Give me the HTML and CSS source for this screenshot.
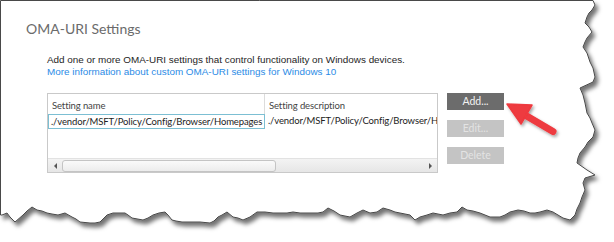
FILE: index.html
```html
<!DOCTYPE html>
<html>
<head>
<meta charset="utf-8">
<link rel="stylesheet" href="styles.css">
</head>
<body>
<div class="sheet">
  <svg class="paper" width="614" height="242" viewBox="0 0 614 242">
    <defs>
      <filter id="sh" x="-5%" y="-5%" width="115%" height="120%">
        <feDropShadow dx="3" dy="4" stdDeviation="2.2" flood-color="#000" flood-opacity="0.55"/>
      </filter>
    </defs>
    <path filter="url(#sh)" fill="#fff" stroke="#4a4a4a" stroke-width="1"
      d="M0.5,0.5 L593,0.5 L595,5 L592,10 L589,13 L587,17 L585,23 L589,27 L592,32 L587,38 L585,42 L583,47 L587,53 L590,62 L593,68 L595,77 L593,82 L580,88 L583,95 L584,99 L585,103 L587,113 L590,118 L592,123 L595,130 L593,137 L588,142 L585,147 L580,153 L578,158 L577,163 L587,170 L595,175 L585,178 L583,183 L585,190 L582,197 L580,203 L577,209 L575,215 L570,220 L563,218 L558,215 L553,212 L547,210 L540,212 L535,213 L530,213 L524,211 L518,210 L510,212 L505,215 L500,217 L490,217 L485,215 L480,213 L473,211 L467,210 L462,207 L457,212 L450,213 L443,215 L433,213 L427,215 L420,217 L415,220 L410,215 L400,213 L395,212 L390,210 L383,208 L377,212 L370,213 L363,210 L357,213 L350,217 L345,216 L340,215 L334,211 L328,208 L323,212 L318,213 L313,213 L300,213 L293,212 L287,213 L280,213 L273,213 L265,212 L257,212 L250,217 L243,220 L238,218 L233,217 L227,212 L222,215 L218,217 L214,221 L210,223 L200,222 L193,222 L182,222 L176,221 L172,220 L168,215 L165,212 L159,213 L153,215 L148,218 L143,220 L132,218 L128,215 L125,213 L119,213 L113,213 L107,215 L100,222 L95,223 L90,223 L80,222 L76,219 L72,217 L65,213 L58,215 L52,214 L47,213 L42,211 L37,210 L32,207 L27,211 L23,215 L15,222 L10,217 L7,213 L2,215 L0.5,215 Z"/>
  </svg>

  <div class="content">
    <h1 class="title">OMA-URI Settings</h1>
    <p class="desc">Add one or more OMA-URI settings that control functionality on Windows devices.<br><a class="link">More information about custom OMA-URI settings for Windows 10</a></p>

    <div class="row">
      <div class="grid">
        <div class="grid-head">
          <div class="col c1">Setting name</div>
          <div class="col c2">Setting description</div>
        </div>
        <div class="grid-row">
          <div class="cell c1 selected">./vendor/MSFT/Policy/Config/Browser/Homepages</div>
          <div class="cell c2">./vendor/MSFT/Policy/Config/Browser/Ho</div>
        </div>
        <div class="grid-fill"></div>
        <div class="hscroll">
          <span class="arr left"></span>
          <div class="track"><div class="thumb"></div></div>
          <span class="arr right"></span>
        </div>
      </div>

      <div class="buttons">
        <button class="btn primary">Add...</button>
        <button class="btn disabled">Edit...</button>
        <button class="btn disabled">Delete</button>
      </div>
    </div>
  </div>

  <svg class="arrow" width="64" height="44" viewBox="504 98 64 44">
    <defs>
      <filter id="ash" x="-20%" y="-20%" width="150%" height="160%">
        <feDropShadow dx="1.5" dy="2" stdDeviation="1.5" flood-color="#000" flood-opacity="0.35"/>
      </filter>
    </defs>
    <g filter="url(#ash)" fill="#ee3a3f" stroke="#ee3a3f">
      <line x1="525" y1="115" x2="553" y2="131.5" stroke-width="7" stroke-linecap="round"/>
      <polygon points="507,104 532,105 521,124" stroke-width="1.5" stroke-linejoin="round"/>
    </g>
  </svg>
</div>
</body>
</html>
```

FILE: styles.css
```css
* { box-sizing: border-box; }
html, body { margin: 0; padding: 0; background: #fff; }
.sheet {
  position: relative;
  width: 614px;
  height: 242px;
  overflow: hidden;
  background: #fff;
}
.paper { position: absolute; left: 0; top: 0; }
.arrow { position: absolute; left: 504px; top: 98px; }

.content {
  position: relative;
  padding: 20px 0 0 26px;
}
.title {
  margin: 0;
  font-family: Lato, "Open Sans", sans-serif;
  font-weight: 400;
  font-size: 14px;
  line-height: 18px;
  color: #6b6b6b;
}
.desc {
  margin: 16px 0 0 21px;
  font-family: "Liberation Sans", Arial, sans-serif;
  font-size: 9.9px;
  line-height: 12px;
  color: #1e1e1e;
}
.link { color: #2b8be6; text-decoration: none; }

.row {
  display: flex;
  align-items: flex-start;
  margin: 15px 0 0 21px;
}
.grid {
  width: 391px;
  height: 80px;
  border: 1px solid #c9c9c9;
  display: flex;
  flex-direction: column;
  font-family: Lato, "Open Sans", sans-serif;
  font-size: 9.5px;
  letter-spacing: -0.12px;
  color: #222;
  background: #fff;
}
.grid-head {
  display: flex;
  height: 20px;
  color: #444;
}
.col {
  padding: 6px 0 0 4px;
  white-space: nowrap;
  overflow: hidden;
  line-height: 12px;
}
.c1 { width: 217px; flex: none; }
.c2 { flex: 1; min-width: 0; }
.grid-head .c1 { border-right: 1px solid #dcdcdc; }
.grid-row {
  display: flex;
  height: 15px;
}
.cell {
  white-space: nowrap;
  overflow: hidden;
  padding: 0 0 0 4px;
  line-height: 13px;
}
.cell.selected {
  border: 1px solid #7cbfd3;
  padding-left: 2px;
}
.cell.c2 { padding-left: 3px; }
.grid-fill { flex: 1; }
.hscroll {
  height: 14px;
  display: flex;
  align-items: center;
  background: linear-gradient(#f3f3f3, #e6e6e6);
  border-top: 1px solid #e2e2e2;
  padding: 0 3px;
}
.arr { width: 0; height: 0; border-top: 3px solid transparent; border-bottom: 3px solid transparent; flex: none; }
.arr.left { border-right: 3px solid #555; margin-left: 3px; }
.arr.right { border-left: 3px solid #555; margin-right: 2px; }
.track { flex: 1; height: 12px; padding: 0 0 0 5px; }
.thumb {
  width: 214px;
  height: 12px;
  border: 1px solid #c4c4c4;
  border-radius: 3px;
  background: linear-gradient(#fafafa, #ececec);
}

.buttons {
  display: flex;
  flex-direction: column;
  gap: 10px;
  margin-left: 9px;
}
.btn {
  width: 57px;
  height: 17px;
  border: 0;
  padding: 0;
  font-family: Lato, "Open Sans", sans-serif;
  font-size: 10.5px;
  line-height: 17px;
  text-align: center;
}
.btn.primary { background: #6c6c6c; color: #f2f2f2; }
.btn.disabled { background: #c4c4c4; color: #e3e3e3; }
```
